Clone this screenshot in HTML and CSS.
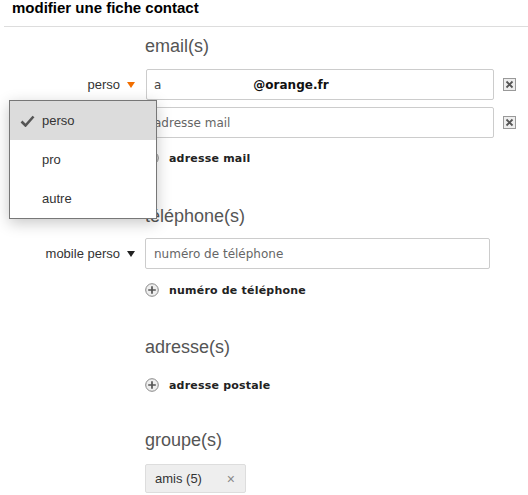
FILE: index.html
```html
<!DOCTYPE html>
<html lang="fr">
<head>
<meta charset="utf-8">
<title>modifier une fiche contact</title>
<link rel="stylesheet" href="styles.css">
</head>
<body>
<div class="page">
  <h1 class="title">modifier une fiche contact</h1>
  <div class="rule"></div>

  <div class="form">
    <section class="section sec-email">
      <h2 class="sec-title">email(s)</h2>
      <div class="field">
        <div class="lbl">perso <span class="tri tri-orange"></span></div>
        <div class="input input-email"><span class="first">a</span><span class="bold at">@orange.fr</span></div>
        <span class="del"><svg width="13" height="13" viewBox="0 0 13 13"><rect x="0.5" y="0.5" width="12" height="12" fill="#eee" stroke="#999"/><path d="M3.5 3.5L9.5 9.5M9.5 3.5L3.5 9.5" stroke="#555" stroke-width="1.8"/></svg></span>
      </div>
      <div class="field field-2">
        <div class="lbl"></div>
        <div class="input input-email"><span class="ph">adresse mail</span></div>
        <span class="del"><svg width="13" height="13" viewBox="0 0 13 13"><rect x="0.5" y="0.5" width="12" height="12" fill="#eee" stroke="#999"/><path d="M3.5 3.5L9.5 9.5M9.5 3.5L3.5 9.5" stroke="#555" stroke-width="1.8"/></svg></span>
      </div>
      <div class="add">
        <svg class="plus" width="14" height="14" viewBox="0 0 14 14"><circle cx="7" cy="7" r="6.3" fill="#eee" stroke="#888"/><path d="M7 3.2v7.6M3.2 7h7.6" stroke="#555" stroke-width="1.7"/></svg>
        <span class="add-txt">adresse mail</span>
      </div>
    </section>

    <section class="section sec-tel">
      <h2 class="sec-title">téléphone(s)</h2>
      <div class="field">
        <div class="lbl">mobile perso <span class="tri tri-dark"></span></div>
        <div class="input input-tel"><span class="ph">numéro de téléphone</span></div>
      </div>
      <div class="add">
        <svg class="plus" width="14" height="14" viewBox="0 0 14 14"><circle cx="7" cy="7" r="6.3" fill="#eee" stroke="#888"/><path d="M7 3.2v7.6M3.2 7h7.6" stroke="#555" stroke-width="1.7"/></svg>
        <span class="add-txt">numéro de téléphone</span>
      </div>
    </section>

    <section class="section sec-addr">
      <h2 class="sec-title">adresse(s)</h2>
      <div class="add add-addr">
        <svg class="plus" width="14" height="14" viewBox="0 0 14 14"><circle cx="7" cy="7" r="6.3" fill="#eee" stroke="#888"/><path d="M7 3.2v7.6M3.2 7h7.6" stroke="#555" stroke-width="1.7"/></svg>
        <span class="add-txt">adresse postale</span>
      </div>
    </section>

    <section class="section sec-group">
      <h2 class="sec-title">groupe(s)</h2>
      <div class="tag"><span>amis (5)</span><span class="tag-x">×</span></div>
    </section>

    <ul class="menu">
      <li class="menu-item active"><svg class="check" width="15" height="12" viewBox="0 0 15 12"><path d="M1.5 6.5L5.5 10.5L13.5 1.5" fill="none" stroke="#555" stroke-width="2.6"/></svg>perso</li>
      <li class="menu-item">pro</li>
      <li class="menu-item">autre</li>
    </ul>
  </div>
</div>
</body>
</html>
```

FILE: styles.css
```css
* { box-sizing: border-box; }

body {
  margin: 0;
  background: #fff;
  font-family: "Liberation Sans", Arial, sans-serif;
  color: #333;
}

.page {
  width: 528px;
  height: 495px;
  overflow: hidden;
}

.title {
  margin: 0;
  padding-left: 12px;
  height: 26px;
  font-size: 15px;
  line-height: 16px;
  font-weight: bold;
  color: #000;
}

.rule {
  margin-left: 4px;
  border-top: 1px solid #ddd;
}

.form {
  position: relative;
  display: flex;
  flex-direction: column;
}

.section {
  display: flex;
  flex-direction: column;
}

.sec-title {
  margin: 0 0 0 145px;
  font-size: 18px;
  line-height: 22px;
  font-weight: normal;
  color: #555;
}

.sec-email { margin-top: 8px; }
.sec-email .sec-title { margin-bottom: 12px; }
.sec-tel { margin-top: 37px; }
.sec-tel .sec-title { margin-bottom: 11px; }
.sec-addr { margin-top: 36px; }
.sec-addr .sec-title { margin-bottom: 17px; }
.sec-group { margin-top: 34px; }
.sec-group .sec-title { margin-bottom: 13px; }

.field {
  display: flex;
  align-items: center;
  height: 31px;
}

.field-2 { margin-top: 7px; }

.lbl {
  width: 145px;
  flex: none;
  display: flex;
  justify-content: flex-end;
  align-items: center;
  gap: 7px;
  padding-right: 10px;
  font-size: 13px;
  color: #333;
}

.tri {
  width: 0;
  height: 0;
  border-left: 4.5px solid transparent;
  border-right: 4.5px solid transparent;
  border-top: 6px solid #222;
}

.tri-orange { border-top-color: #f16e00; }

.input {
  height: 31px;
  border: 1px solid #ccc;
  border-radius: 2px;
  display: flex;
  align-items: center;
  padding-left: 7px;
  font-family: "DejaVu Sans", Verdana, sans-serif;
  font-size: 12px;
  color: #222;
  background: #fff;
}

.input-email {
  width: 348px;
  margin-left: 1px;
}

.input-tel {
  width: 345px;
  padding-left: 8px;
}

.first { color: #444; }

.bold { font-weight: bold; }

.at { margin-left: 92px; color: #111; }

.ph { color: #666; }

.del {
  display: flex;
  margin-left: 9px;
}

.add {
  display: flex;
  align-items: center;
  gap: 10px;
  height: 20px;
  margin-top: 10px;
  padding-left: 145px;
}

.sec-tel .add { margin-top: 11px; }
.add-addr { margin-top: 0; }

.plus { flex: none; }

.add-txt {
  font-family: "DejaVu Sans", Verdana, sans-serif;
  font-size: 11px;
  font-weight: bold;
  letter-spacing: 0.2px;
  color: #222;
}

.tag {
  margin-left: 145px;
  width: 101px;
  height: 29px;
  display: flex;
  align-items: center;
  justify-content: space-between;
  padding: 0 10px 0 9px;
  background: #eee;
  border: 1px solid #ddd;
  border-radius: 2px;
  font-size: 13px;
  color: #333;
}

.tag-x {
  color: #888;
  font-size: 14px;
}

.menu {
  position: absolute;
  left: 9px;
  top: 73px;
  width: 148px;
  margin: 0;
  padding: 0;
  list-style: none;
  background: #fff;
  border: 1px solid #777;
  box-shadow: 0 4px 14px rgba(0, 0, 0, 0.22);
}

.menu-item {
  position: relative;
  height: 39px;
  display: flex;
  align-items: center;
  padding-left: 32px;
  font-size: 13px;
  color: #333;
}

.menu-item.active { background: #dcdcdc; }

.check {
  position: absolute;
  left: 10px;
  top: 14px;
}
```
